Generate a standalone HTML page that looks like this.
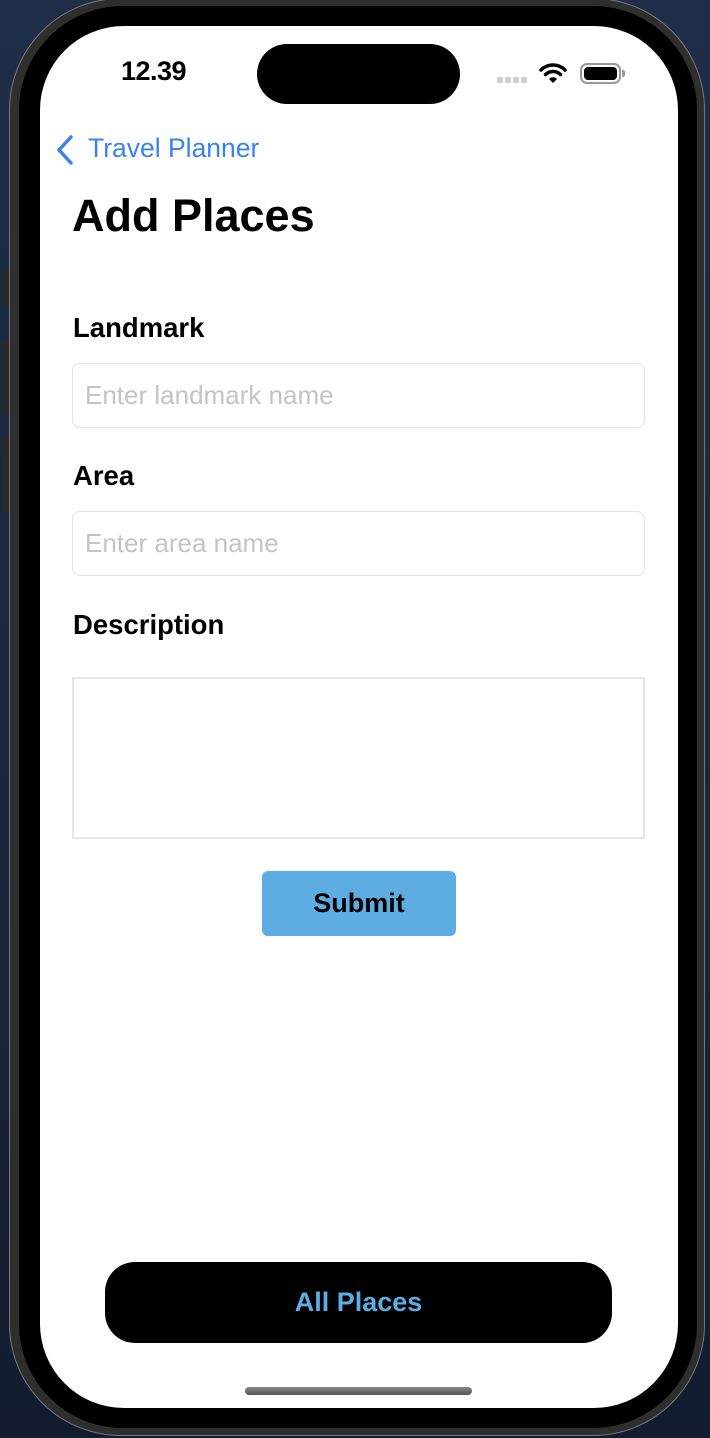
<!DOCTYPE html>
<html><head><meta charset="utf-8"><style>
*{margin:0;padding:0;box-sizing:border-box}
body{width:710px;height:1438px;overflow:hidden;background:linear-gradient(180deg,#1e2d48 0%,#1a2840 50%,#121c2e 100%);font-family:"Liberation Sans",Arial,sans-serif;position:relative}
.abs{position:absolute}
.frame{left:9px;top:-2px;width:696px;height:1438px;border-radius:112px;background:#2e2e2e;border:1px solid #777}
.bezel{left:19px;top:6px;width:678px;height:1422px;border-radius:104px;background:#000}
.screen{left:40px;top:26px;width:638px;height:1382px;border-radius:84px;background:#fff;overflow:hidden}
.btn{background:#2a2a2a;left:2px;width:8px;border-radius:2px}
.lbl{font-size:27.5px;font-weight:bold;color:#000;left:73px}
.inp{left:72px;width:573px;height:65px;border:1px solid #e3e3e3;border-radius:8px;color:#c4c4c4;font-size:26px;padding-left:12px;line-height:63px}
</style></head><body>
<div class="abs btn" style="top:270px;height:36px"></div>
<div class="abs btn" style="top:340px;height:75px"></div>
<div class="abs btn" style="top:437px;height:75px"></div>
<div class="abs frame"></div>
<div class="abs bezel"></div>
<div class="abs screen"></div>
<div class="abs" style="left:257px;top:44px;width:203px;height:60px;border-radius:30px;background:#000"></div>
<div class="abs" style="left:121px;top:56px;font-size:27px;font-weight:bold;letter-spacing:-0.5px">12.39</div>
<div class="abs" style="left:497px;top:77px;width:31px;height:6px">
<span class="abs" style="left:0;width:6px;height:6px;background:#ccc;border-radius:1px"></span>
<span class="abs" style="left:8px;width:6px;height:6px;background:#ccc;border-radius:1px"></span>
<span class="abs" style="left:16px;width:6px;height:6px;background:#ccc;border-radius:1px"></span>
<span class="abs" style="left:24px;width:6px;height:6px;background:#ccc;border-radius:1px"></span></div>
<svg class="abs" style="left:539px;top:62px" width="28" height="22" viewBox="0 0 28 22"><path d="M2 8 A17 17 0 0 1 26 8" stroke="#000" stroke-width="3.5" fill="none" stroke-linecap="round"/><path d="M6.5 12.5 A11 11 0 0 1 21.5 12.5" stroke="#000" stroke-width="3.5" fill="none" stroke-linecap="round"/><path d="M10 17 L14 21 L18 17 A5.5 5.5 0 0 0 10 17Z" fill="#000"/></svg>
<div class="abs" style="left:580px;top:63px;width:41px;height:21px;border:2px solid #999;border-radius:7px;padding:2px"><div style="width:100%;height:100%;background:#000;border-radius:4px"></div></div>
<div class="abs" style="left:622px;top:70px;width:3px;height:7px;background:#999;border-radius:0 2px 2px 0"></div>
<svg class="abs" style="left:54px;top:134px" width="22" height="32" viewBox="0 0 22 32"><path d="M17 3 L5 16 L17 29" stroke="#3a82f0" stroke-width="3.5" fill="none" stroke-linecap="round" stroke-linejoin="round"/></svg>
<div class="abs" style="left:88px;top:133px;font-size:26.5px;color:#3a82f0">Travel Planner</div>
<div class="abs" style="left:72px;top:190px;font-size:45px;font-weight:bold">Add Places</div>
<div class="abs lbl" style="top:312px">Landmark</div>
<div class="abs inp" style="top:363px">Enter landmark name</div>
<div class="abs lbl" style="top:460px">Area</div>
<div class="abs inp" style="top:511px">Enter area name</div>
<div class="abs lbl" style="top:609px">Description</div>
<div class="abs" style="left:72px;top:677px;width:573px;height:162px;border:2px solid #e6e6e6"></div>
<div class="abs" style="left:262px;top:871px;width:194px;height:65px;background:#5dade2;border-radius:6px;text-align:center;line-height:65px;font-size:27px;font-weight:bold">Submit</div>
<div class="abs" style="left:105px;top:1262px;width:507px;height:81px;background:#000;border-radius:30px;text-align:center;line-height:81px;font-size:27px;font-weight:bold;color:#5dade2">All Places</div>
<div class="abs" style="left:245px;top:1387px;width:227px;height:8px;background:linear-gradient(#888,#555);border-radius:4px"></div>
</body></html>
